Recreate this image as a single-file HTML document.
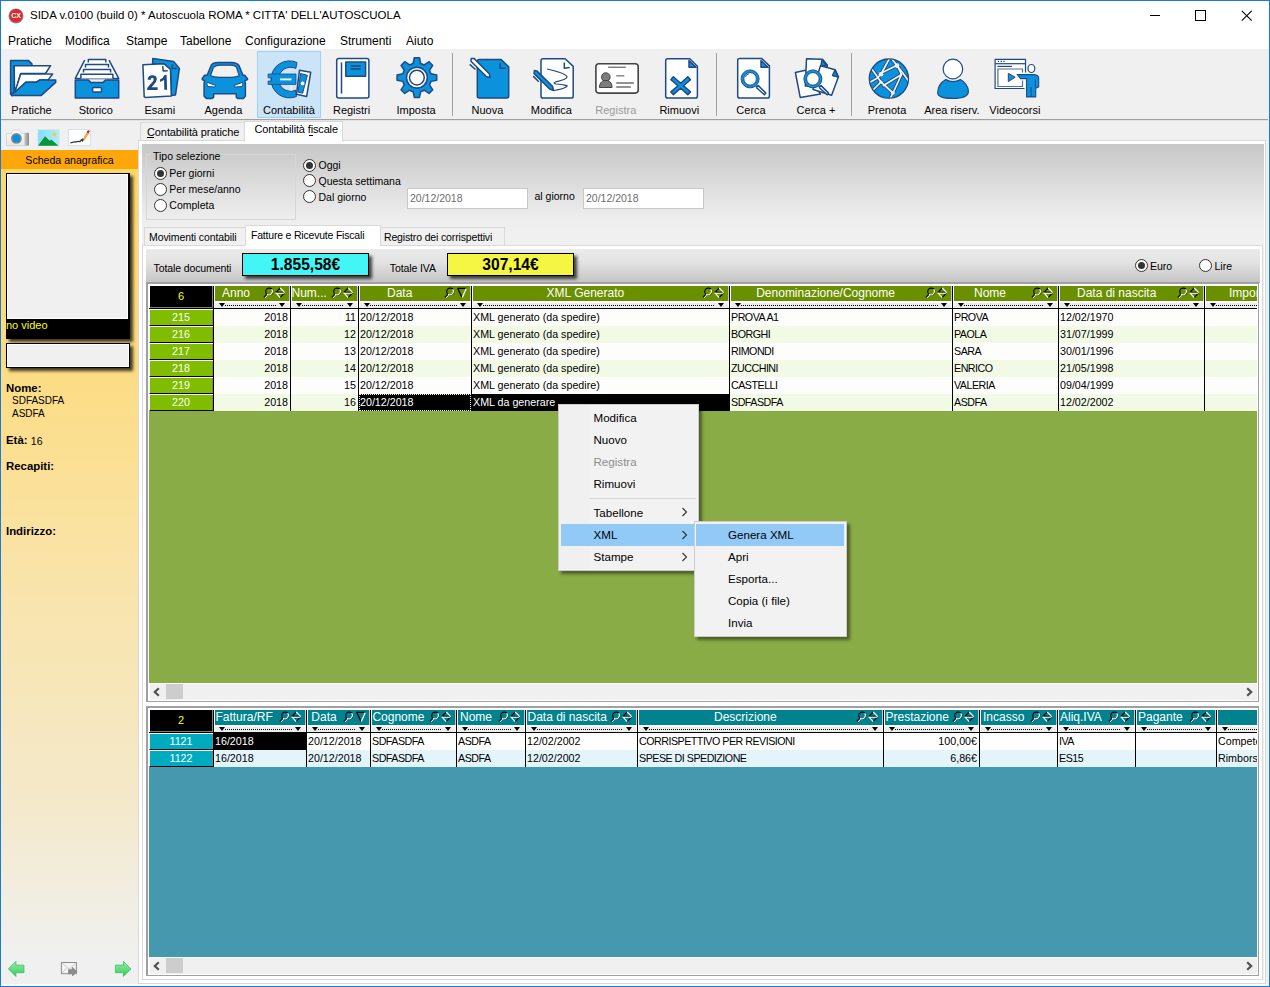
<!DOCTYPE html>
<html><head><meta charset="utf-8"><title>SIDA</title>
<style>
html,body{margin:0;padding:0;}
body{width:1270px;height:987px;position:relative;overflow:hidden;background:#f0f0f0;font-family:"Liberation Sans",sans-serif;}
.t{position:absolute;line-height:1;white-space:pre;}
.r{position:absolute;box-sizing:border-box;}
</style></head><body>
<div class="r" style="left:0px;top:0px;width:1270px;height:49px;background:#fff;"></div>
<div class="r" style="left:0px;top:0px;width:1270px;height:1px;background:#1a7ad6;"></div>
<div class="r" style="left:0px;top:0px;width:1px;height:987px;background:#1a7ad6;"></div>
<div class="r" style="left:1269px;top:0px;width:1px;height:987px;background:#1a7ad6;"></div>
<div class="r" style="left:0px;top:986px;width:1270px;height:1px;background:#1a7ad6;"></div>
<svg class="r" style="left:8px;top:8px;" width="16" height="16" viewBox="0 0 16 16"><circle cx="8" cy="8" r="7.5" fill="#888"/><circle cx="8" cy="7.6" r="6.6" fill="#e0262e"/><text x="8" y="10.2" font-size="7" font-weight="bold" text-anchor="middle" fill="#fff" font-family="Liberation Sans">CX</text></svg>
<div class="t" style="left:30px;top:10.37px;font-size:11.5px;color:#000;">SIDA v.0100 (build 0) * Autoscuola ROMA * CITTA' DELL'AUTOSCUOLA</div>
<div class="r" style="left:1150px;top:15px;width:10px;height:1px;background:#000;"></div>
<div class="r" style="left:1195px;top:10px;width:11px;height:11px;border:1px solid #000;"></div>
<svg class="r" style="left:1240.5px;top:9.5px;" width="12" height="12" viewBox="0 0 12 12"><path d="M0.8 0.8L10.7 10.7M10.7 0.8L0.8 10.7" stroke="#000" stroke-width="1.05"/></svg>
<div class="t" style="left:8px;top:35.14px;font-size:12px;color:#000;">Pratiche</div>
<div class="t" style="left:65px;top:35.14px;font-size:12px;color:#000;">Modifica</div>
<div class="t" style="left:126px;top:35.14px;font-size:12px;color:#000;">Stampe</div>
<div class="t" style="left:180px;top:35.14px;font-size:12px;color:#000;">Tabellone</div>
<div class="t" style="left:245px;top:35.14px;font-size:12px;color:#000;">Configurazione</div>
<div class="t" style="left:340px;top:35.14px;font-size:12px;color:#000;">Strumenti</div>
<div class="t" style="left:406px;top:35.14px;font-size:12px;color:#000;">Aiuto</div>
<div class="r" style="left:1px;top:119px;width:1267px;height:1px;background:#a0a0a0;"></div>
<div class="r" style="left:1px;top:120px;width:1267px;height:1px;background:#e3e3e3;"></div>
<div class="r" style="left:257px;top:51px;width:64px;height:67px;background:#cce4f7;border:1px solid #99d1ff;"></div>
<div class="t" style="left:-8.5px;top:104.89px;font-size:11px;color:#000;width:80px;text-align:center;">Pratiche</div>
<div class="t" style="left:55.8px;top:104.89px;font-size:11px;color:#000;width:80px;text-align:center;">Storico</div>
<div class="t" style="left:119.80000000000001px;top:104.89px;font-size:11px;color:#000;width:80px;text-align:center;">Esami</div>
<div class="t" style="left:183.4px;top:104.89px;font-size:11px;color:#000;width:80px;text-align:center;">Agenda</div>
<div class="t" style="left:249px;top:104.89px;font-size:11px;color:#000;width:80px;text-align:center;">Contabilità</div>
<div class="t" style="left:311.6px;top:104.89px;font-size:11px;color:#000;width:80px;text-align:center;">Registri</div>
<div class="t" style="left:376px;top:104.89px;font-size:11px;color:#000;width:80px;text-align:center;">Imposta</div>
<div class="t" style="left:447.4px;top:104.89px;font-size:11px;color:#000;width:80px;text-align:center;">Nuova</div>
<div class="t" style="left:511.29999999999995px;top:104.89px;font-size:11px;color:#000;width:80px;text-align:center;">Modifica</div>
<div class="t" style="left:575.8px;top:104.89px;font-size:11px;color:#9a9a9a;width:80px;text-align:center;">Registra</div>
<div class="t" style="left:639.3px;top:104.89px;font-size:11px;color:#000;width:80px;text-align:center;">Rimuovi</div>
<div class="t" style="left:711px;top:104.89px;font-size:11px;color:#000;width:80px;text-align:center;">Cerca</div>
<div class="t" style="left:776px;top:104.89px;font-size:11px;color:#000;width:80px;text-align:center;">Cerca +</div>
<div class="t" style="left:847px;top:104.89px;font-size:11px;color:#000;width:80px;text-align:center;">Prenota</div>
<div class="t" style="left:911.9px;top:104.89px;font-size:11px;color:#000;width:80px;text-align:center;">Area riserv.</div>
<div class="t" style="left:974.9px;top:104.89px;font-size:11px;color:#000;width:80px;text-align:center;">Videocorsi</div>
<div class="r" style="left:452px;top:53px;width:1px;height:63px;background:#a0a0a0;"></div>
<div class="r" style="left:716px;top:53px;width:1px;height:63px;background:#a0a0a0;"></div>
<div class="r" style="left:851px;top:53px;width:1px;height:63px;background:#a0a0a0;"></div>
<svg class="r" style="left:5px;top:52px;" width="60" height="50" viewBox="0 0 60 50"><path d="M5.6 8.4 H23.3 L26.9 11.9 V13.7 H9.2 V42 L7.2 43.6 L5.6 42 Z" fill="#0a92dc" stroke="#1f4a84" stroke-width="1.5" stroke-linejoin="round"/><path d="M9.2 13.7 H45.6 L40.5 21.5 H15.7 L12.4 32.4 L9.6 40.5 Z" fill="#fff" stroke="#1f4a84" stroke-width="1.5" stroke-linejoin="round"/><path d="M15.7 22 H47.6 L43.1 27.9 H35 L31.4 30.2 H20.8 L9.6 40.5 L12.4 32.4 Z" fill="#fff" stroke="#1f4a84" stroke-width="1.5" stroke-linejoin="round"/><path d="M9.6 40.5 L20.8 30.2 H31.4 L35 27.9 H50.7 V30.4 L36 43.6 H7.1 L5.6 42 Z" fill="#0a92dc" stroke="#1f4a84" stroke-width="1.5" stroke-linejoin="round"/></svg>
<svg class="r" style="left:68px;top:52px;" width="60" height="50" viewBox="0 0 60 50"><path d="M16.7 8.1 L7.3 26.4 H50.7 L41 8.1" fill="#fff" stroke="#1f4a84" stroke-width="1.5" stroke-linejoin="round"/><path d="M20.3 10.6 V7.6 H37.8 V10.6" fill="#fff" stroke="#1f4a84" stroke-width="1.5" stroke-linejoin="round"/><path d="M17.5 15.5 V12.4 H40.5 V15.5" fill="#fff" stroke="#1f4a84" stroke-width="1.5" stroke-linejoin="round"/><path d="M15.5 20.5 V17.5 H42.6 V20.5" fill="#fff" stroke="#1f4a84" stroke-width="1.5" stroke-linejoin="round"/><path d="M12.9 26.4 V22.3 H44.9 V26.4" fill="#fff" stroke="#1f4a84" stroke-width="1.5" stroke-linejoin="round"/><path d="M7.3 28.1 H20.3 L22.8 30.4 H35 L37.5 28.1 H50.7 V45.9 H7.3 Z" fill="#0a92dc" stroke="#1f4a84" stroke-width="1.5" stroke-linejoin="round"/><rect x="24.6" y="35.5" width="8.9" height="4.5" rx="1" fill="#fff" stroke="#1f4a84" stroke-width="1.5" stroke-linejoin="round"/></svg>
<svg class="r" style="left:132px;top:52px;" width="60" height="50" viewBox="0 0 60 50"><path d="M20.8 6.6 L41.6 9.4 L47.4 16.5 L43.5 43 L39.2 43.6 L38.5 17.5 L31.9 11.7 L20.6 12.2 Z" fill="#0a92dc" stroke="#1f4a84" stroke-width="1.5" stroke-linejoin="round"/><path d="M40.5 12.2 L40 16.2 L44.6 16.7" fill="none" stroke="#1f4a84" stroke-width="1.5" stroke-linejoin="round"/><path d="M10.9 12.7 L31.9 11.7 L38.5 17.5 L39.3 44.1 L13.2 45.4 L12.2 44.6 Z" fill="#fff" stroke="#1f4a84" stroke-width="1.5" stroke-linejoin="round"/><path d="M30.7 14.2 L31.2 19 L35.7 18.8" fill="none" stroke="#1f4a84" stroke-width="1.5" stroke-linejoin="round"/><path d="M15.5 27.6 Q16.2 23.2 20.5 23.2 Q24.8 23.4 24.8 27.2 Q24.6 30 21.5 33 L19.6 35.2 H25.6 V37.9 H15.2 V36 Q17 33.6 20.2 30.3 Q21.8 28.6 21.7 27.3 Q21.5 25.7 20.3 25.7 Q18.8 25.7 18.4 28 Z" fill="#1f4a84"/><path d="M28 27.6 Q31.2 26.2 32.6 23.1 H34.6 L35.1 37.8 H32.3 L32.1 27.8 Q30.4 29.4 28.2 30 Z" fill="#1f4a84"/></svg>
<svg class="r" style="left:196px;top:52px;" width="60" height="50" viewBox="0 0 60 50"><path d="M15.2 13.2 Q17 10.4 21.8 10.4 H35.5 Q41 10.4 43.1 13.7 L46.9 23.3 H48.7 L51.7 26.9 L50.7 28.1 L48.7 28.9 L49.4 30.9 V44.1 L47.6 46.4 H41.6 L40.3 45.1 V41.8 H17.7 V45.1 L16.2 46.4 H10.4 L8.1 44.1 V30.9 L8.9 28.9 L6.3 27.6 V26.4 L8.6 23.3 H11.2 Z" fill="#0a92dc" stroke="#1f4a84" stroke-width="1.5" stroke-linejoin="round"/><path d="M17.5 15.2 Q20 13.2 24.3 13.2 H35 Q39 13.2 40.5 15.2 L43.3 23.8 Q39 25.4 35.5 25.3 H24.3 Q18 25.4 14.4 23.8 Z" fill="#f0f0f0" stroke="#1f4a84" stroke-width="1.2"/><path d="M11.4 30.4 L19.8 33.5 L18.8 35 L11.7 34.5 L10.9 31.9 Z" fill="#fff" stroke="#1f4a84" stroke-width="1"/><path d="M46.4 30.4 L38 33.5 L39 35 L46.1 34.5 L46.9 31.9 Z" fill="#fff" stroke="#1f4a84" stroke-width="1"/></svg>
<svg class="r" style="left:260px;top:52px;" width="60" height="50" viewBox="0 0 60 50"><path d="M37 10.5 A18.5 18.5 0 1 0 36.5 44.5 L35.5 38.2 A12 12 0 1 1 35.8 16.5 Z" fill="#0a92dc" stroke="#1f4a84" stroke-width="1"/><path d="M8.1 22 H36 V32.4 H8.1 V29.1 H11.5 V25.8 H8.1 Z" fill="#0a92dc" stroke="#1f4a84" stroke-width="0.8"/><path d="M20 27.4 H31.5" stroke="#f4f8fc" stroke-width="1.9"/><path d="M31.2 33 V38.5" stroke="#f4f8fc" stroke-width="1.2"/><path d="M39.5 18.2 L50.7 20.3 L46.6 44.6 L36.5 42.3 Z" fill="#fff" stroke="#1f4a84" stroke-width="1.5" stroke-linejoin="round"/><path d="M40.5 21.5 L47.4 23.3 L42.6 41.3 L38 40 Z" fill="#0a92dc" stroke="#1f4a84" stroke-width="1"/><circle cx="42.6" cy="31.4" r="1.9" fill="#fff"/></svg>
<svg class="r" style="left:323px;top:52px;" width="60" height="50" viewBox="0 0 60 50"><rect x="13.7" y="6.6" width="32.2" height="39.3" rx="2" fill="#fff" stroke="#1f4a84" stroke-width="1.5" stroke-linejoin="round"/><path d="M18.5 10.4 V41.6" stroke="#1f4a84" stroke-width="1.5" stroke-linejoin="round"/><rect x="22.8" y="10.1" width="19.8" height="14.2" fill="#0a92dc" stroke="#1f4a84" stroke-width="1.5" stroke-linejoin="round"/><path d="M27.6 13.9 H37.8 M27.6 17 H37.8" stroke="#1f4a84" stroke-width="1.5" stroke-linejoin="round"/></svg>
<svg class="r" style="left:387px;top:52px;" width="60" height="50" viewBox="0 0 60 50"><path d="M26.14 11.49 L27.31 5.77 L32.49 5.77 L33.66 11.49 L37.22 12.97 L42.09 9.74 L45.76 13.41 L42.53 18.28 L44.01 21.84 L49.73 23.01 L49.73 28.19 L44.01 29.36 L42.53 32.92 L45.76 37.79 L42.09 41.46 L37.22 38.23 L33.66 39.71 L32.49 45.43 L27.31 45.43 L26.14 39.71 L22.58 38.23 L17.71 41.46 L14.04 37.79 L17.27 32.92 L15.79 29.36 L10.07 28.19 L10.07 23.01 L15.79 21.84 L17.27 18.28 L14.04 13.41 L17.71 9.74 L22.58 12.97Z" fill="#0a92dc" stroke="#1f4a84" stroke-width="1.5" stroke-linejoin="round"/><circle cx="29.9" cy="25.6" r="10.4" fill="#fff" stroke="#1f4a84" stroke-width="1.5" stroke-linejoin="round"/><circle cx="29.9" cy="25.6" r="7.4" fill="#fff" stroke="#1f4a84" stroke-width="1.5" stroke-linejoin="round"/></svg>
<svg class="r" style="left:457px;top:52px;" width="60" height="50" viewBox="0 0 60 50"><path d="M20.3 9.5 Q20.3 7.6 22.3 7.6 H44.1 L51.7 14.7 V44 Q51.7 45.9 49.7 45.9 H22.3 Q20.3 45.9 20.3 44 Z" fill="#0a92dc" stroke="#1f4a84" stroke-width="1.5" stroke-linejoin="round"/><path d="M43.1 10.9 V16.2 H48.7" fill="none" stroke="#1f4a84" stroke-width="1.5" stroke-linejoin="round"/><path d="M14.2 6.6 L17 6.4 L32.4 22 L33 25.6 L29.6 24.8 L14 9.3 Z" fill="#fff" stroke="#1f4a84" stroke-width="1.5" stroke-linejoin="round"/><path d="M12.7 12.4 L18.5 17.5" stroke="#1f4a84" stroke-width="1.5" stroke-linejoin="round"/></svg>
<svg class="r" style="left:521px;top:52px;" width="60" height="50" viewBox="0 0 60 50"><path d="M20 8.8 Q20 6.8 22 6.8 H44.1 L52.2 14.4 V44 Q52.2 46.1 50.2 46.1 H22 Q20 46.1 20 44 Z" fill="#fff" stroke="#1f4a84" stroke-width="1.5" stroke-linejoin="round"/><path d="M43.3 10.4 V16.2 L48.7 15.5" fill="none" stroke="#1f4a84" stroke-width="1.5" stroke-linejoin="round"/><path d="M26.1 17 Q44 21 46.1 24.8 Q46 27.5 35 29.8 Q31 31.2 35 32 Q47 33 46.1 34.2 Q43 37 32.9 38.5" fill="none" stroke="#1f4a84" stroke-width="1.2"/><path d="M13.4 18.6 L15.8 18.9 L31.5 34.3 L32.6 38.6 L28.6 37 L13 21.4 Z" fill="#0a92dc" stroke="#1f4a84" stroke-width="1.5" stroke-linejoin="round"/><path d="M12.2 24.1 L17.7 29.7" stroke="#1f4a84" stroke-width="1.5" stroke-linejoin="round"/></svg>
<svg class="r" style="left:585px;top:52px;" width="60" height="50" viewBox="0 0 60 50"><rect x="10.9" y="11.7" width="42.3" height="29.4" rx="3" fill="#fff" stroke="#454545" stroke-width="1.6"/><path d="M23.1 15.2 H40.8" stroke="#454545" stroke-width="1"/><circle cx="20.8" cy="25.1" r="4.3" fill="#7d7d7d" stroke="#454545" stroke-width="1"/><path d="M14.4 35.5 Q14.6 30 19 28.5 H22.6 Q27 30 27.1 35.5 Z" fill="#7d7d7d" stroke="#454545" stroke-width="1"/><path d="M31.2 23.8 H39.3" stroke="#8a8a8a" stroke-width="1.5"/><path d="M31.2 30.9 H48.9 M31.2 35 H45.9" stroke="#707070" stroke-width="1.5"/></svg>
<svg class="r" style="left:649px;top:52px;" width="60" height="50" viewBox="0 0 60 50"><path d="M16.7 8.8 Q16.7 6.8 18.7 6.8 H40.8 L48.4 14.2 V44 Q48.4 46.1 46.4 46.1 H18.7 Q16.7 46.1 16.7 44 Z" fill="#fff" stroke="#1f4a84" stroke-width="1.5" stroke-linejoin="round"/><path d="M40 8.6 V15.2 H47.1 Z" fill="#0a92dc" stroke="#1f4a84" stroke-width="1.5" stroke-linejoin="round"/><path d="M24.3 24.8 L31.7 31.3 L38.8 24.8 L41.5 27.7 L34.5 33.7 L41.5 39.9 L38.8 42.6 L31.7 36.3 L24.3 42.6 L21.9 39.9 L29 33.7 L21.9 27.7 Z" fill="#0a92dc" stroke="#1f4a84" stroke-width="1.5" stroke-linejoin="round"/></svg>
<svg class="r" style="left:721px;top:52px;" width="60" height="50" viewBox="0 0 60 50"><path d="M16.7 8.6 Q16.7 6.6 18.7 6.6 H40.8 L48.4 13.9 V44 Q48.4 46.1 46.4 46.1 H18.7 Q16.7 46.1 16.7 44 Z" fill="#fff" stroke="#1f4a84" stroke-width="1.5" stroke-linejoin="round"/><path d="M40 8.6 V15.2 H47.1 Z" fill="#0a92dc" stroke="#1f4a84" stroke-width="1.5" stroke-linejoin="round"/><path d="M35.5 34.5 L37.3 33.6 L44.8 41.1 L43.4 42.8 L35.6 35.8 Z" fill="#fff" stroke="#1f4a84" stroke-width="1.5" stroke-linejoin="round"/><circle cx="29.1" cy="26.9" r="7.6" fill="#fff" stroke="#0a92dc" stroke-width="2.6"/><circle cx="29.1" cy="26.9" r="9" fill="none" stroke="#1f4a84" stroke-width="1"/><circle cx="29.1" cy="26.9" r="6.3" fill="none" stroke="#1f4a84" stroke-width="1"/><path d="M24.5 25 Q25 22.5 28 21.8" fill="none" stroke="#1f4a84" stroke-width="0.9"/></svg>
<svg class="r" style="left:785px;top:52px;" width="60" height="50" viewBox="0 0 60 50"><path d="M10.4 20.5 L20.3 18.2 L35.5 42.1 L15.2 45.4 Z" fill="#fff" stroke="#1f4a84" stroke-width="1.5" stroke-linejoin="round"/><path d="M21.5 6.8 L37.5 7.3 L42.3 12.9 L40 35 L20.3 34 Z" fill="#fff" stroke="#1f4a84" stroke-width="1.5" stroke-linejoin="round"/><path d="M37 8 L36 13.5 L42 14 Z" fill="#0a92dc" stroke="#1f4a84" stroke-width="1.5" stroke-linejoin="round"/><path d="M35.5 13.7 L50.2 17.7 L53.5 24.8 L46.6 43.3 L28 37.5 Z" fill="#fff" stroke="#1f4a84" stroke-width="1.5" stroke-linejoin="round"/><path d="M50 18 L47.5 23.5 L53 25 Z" fill="#0a92dc" stroke="#1f4a84" stroke-width="1.5" stroke-linejoin="round"/><path d="M34.3 34.5 L36.1 33.6 L43.6 41.1 L42.2 42.8 L34.4 35.8 Z" fill="#fff" stroke="#1f4a84" stroke-width="1.5" stroke-linejoin="round"/><circle cx="27.9" cy="26.9" r="7.6" fill="#fff" stroke="#0a92dc" stroke-width="2.6"/><circle cx="27.9" cy="26.9" r="9" fill="none" stroke="#1f4a84" stroke-width="1"/><circle cx="27.9" cy="26.9" r="6.3" fill="none" stroke="#1f4a84" stroke-width="1"/></svg>
<svg class="r" style="left:857px;top:52px;" width="60" height="50" viewBox="0 0 60 50"><defs><clipPath id="gclip"><circle cx="31.9" cy="26.6" r="19"/></clipPath></defs><circle cx="31.9" cy="26.6" r="19.6" fill="#0a92dc" stroke="#1f4a84" stroke-width="1.3"/><g clip-path="url(#gclip)"><g stroke="#1f4a84" stroke-width="3.6" fill="none" stroke-linecap="round" stroke-linejoin="round"><path d="M32.5 6.5 L24 22 L20.5 26 L12.5 30.5"/><path d="M14.5 16.5 L24 30 L36 41 L33 47"/><path d="M35 7 L39.5 13 L45.5 20.5 L51.5 29"/><path d="M25.5 20.5 L39.5 13.5"/><path d="M26.5 33.5 L44.5 22.5"/><path d="M36 41 L44.5 22.5 L41 15"/><path d="M16 38 L21 33 L24 30"/></g><g stroke="#f4f4f4" stroke-width="1.7" fill="none" stroke-linecap="round" stroke-linejoin="round"><path d="M32.5 6.5 L24 22 L20.5 26 L12.5 30.5"/><path d="M14.5 16.5 L24 30 L36 41 L33 47"/><path d="M35 7 L39.5 13 L45.5 20.5 L51.5 29"/><path d="M25.5 20.5 L39.5 13.5"/><path d="M26.5 33.5 L44.5 22.5"/><path d="M36 41 L44.5 22.5 L41 15"/><path d="M16 38 L21 33 L24 30"/></g></g><circle cx="24" cy="22.3" r="2.3" fill="#f4f4f4"/><circle cx="40" cy="13.6" r="2.3" fill="#f4f4f4"/><circle cx="24" cy="30" r="1.6" fill="#f4f4f4"/><circle cx="36" cy="41" r="1.8" fill="#f4f4f4"/></svg>
<svg class="r" style="left:921px;top:52px;" width="60" height="50" viewBox="0 0 60 50"><circle cx="31.9" cy="17" r="9.8" fill="#fff" stroke="#1f4a84" stroke-width="1.2"/><path d="M24.8 27.6 Q31.9 31.5 39.5 27.6 Q47 32 47.4 39.5 Q47.4 46.4 31.7 46.4 Q16.4 46.4 16.7 40.5 Q17 32 24.8 27.6 Z" fill="#0a92dc" stroke="#1f4a84" stroke-width="1.2"/></svg>
<svg class="r" style="left:985px;top:52px;" width="60" height="50" viewBox="0 0 60 50"><path d="M40.5 20.5 V7.3 H10.1 V36.5 H39.5" fill="#fff" stroke="#1f4a84" stroke-width="1.2"/><path d="M10.1 11.7 H40.5" stroke="#1f4a84" stroke-width="1.2"/><path d="M12.9 9.4 H14 M15.6 9.4 H17 M18.3 9.4 H19.6" stroke="#1f4a84" stroke-width="1.2"/><path d="M12.4 14.4 H26.9" stroke="#1f4a84" stroke-width="1.2"/><path d="M37.5 20.5 V17 H12.9 V34.5 H37.5 V28.5" fill="#fff" stroke="#4f6f9f" stroke-width="1.2"/><path d="M23.3 21.3 L30.2 25.3 L23.3 29.6 Z" fill="#0a92dc" stroke="#1f4a84" stroke-width="1"/><ellipse cx="46.4" cy="16.5" rx="3.4" ry="4" fill="#fff" stroke="#1f4a84" stroke-width="1.2"/><path d="M32.4 22.6 H49.2 Q53.7 23 53.7 26.4 V35 L50.7 36.2 V44.9 H41.6 V26.6 H35.5 Z" fill="#0a92dc" stroke="#1f4a84" stroke-width="1.1"/><path d="M46.1 35 V44.9 M50.4 27.4 V35.5" stroke="#1f4a84" stroke-width="1"/></svg>
<div class="r" style="left:1px;top:169px;width:137px;height:815px;background:linear-gradient(#ffd866 0px,#fddb7c 160px,#f9e3a6 390px,#f4e9cc 640px,#f0efe9 760px,#f0f0f0 790px);"></div>
<div class="r" style="left:1px;top:150px;width:137px;height:19px;background:#ffa60a;"></div>
<div class="t" style="left:1px;top:154.53px;font-size:10.6px;color:#000;width:137px;text-align:center;">Scheda anagrafica</div>
<div class="r" style="left:6px;top:173px;width:124px;height:166px;background:#000;box-shadow:3px 3px 3px rgba(0,0,0,0.75);"></div>
<div class="r" style="left:7px;top:174px;width:121px;height:145px;background:#f0f0f0;border:1px solid #fff;border-top-color:#fff;"></div>
<div class="t" style="left:6px;top:320.49px;font-size:11px;color:#ffff00;">no video</div>
<div class="r" style="left:6px;top:343px;width:124px;height:25px;background:#f0f0f0;border:1px solid #000;box-shadow:3px 3px 3px rgba(0,0,0,0.75);"></div>
<div class="r" style="left:7px;top:344px;width:122px;height:23px;border:1px solid #fff;"></div>
<div class="t" style="left:6px;top:382.55px;font-size:11.4px;color:#000;font-weight:bold;">Nome:</div>
<div class="t" style="left:12px;top:396.34px;font-size:10px;color:#000;">SDFASDFA</div>
<div class="t" style="left:12px;top:409.04px;font-size:10px;color:#000;">ASDFA</div>
<div class="t" style="left:6px;top:434.55px;font-size:11.4px;color:#000;font-weight:bold;">Età:</div>
<div class="t" style="left:30.8px;top:435.51px;font-size:10.5px;color:#000;">16</div>
<div class="t" style="left:6px;top:460.55px;font-size:11.4px;color:#000;font-weight:bold;">Recapiti:</div>
<div class="t" style="left:6px;top:525.95px;font-size:11.4px;color:#000;font-weight:bold;">Indirizzo:</div>
<svg class="r" style="left:5px;top:128px;" width="26" height="20" viewBox="0 0 26 20"><defs><linearGradient id="cg" x1="0" x2="0" y1="0" y2="1"><stop offset="0" stop-color="#fafafa"/><stop offset="1" stop-color="#e6e6e6"/></linearGradient><linearGradient id="gg" x1="0" x2="1" y1="0" y2="0"><stop offset="0" stop-color="#c8c8c8"/><stop offset="1" stop-color="#888"/></linearGradient></defs><path d="M1.5 5.5 H6 L8 2 H14.5 L16.5 5.5 H20 V17.8 H1.5 Z" fill="url(#cg)" stroke="#d0d0d0" stroke-width="0.8"/><rect x="19.5" y="4.8" width="4.5" height="13" rx="1" fill="url(#gg)"/><circle cx="11.4" cy="10.4" r="5.4" fill="#8a8a8a"/><circle cx="11.4" cy="10.4" r="3.9" fill="#0d8fe0"/></svg>
<svg class="r" style="left:37px;top:129px;" width="23" height="18" viewBox="0 0 23 18"><defs><linearGradient id="sk" x1="0" x2="1" y1="0" y2="0"><stop offset="0" stop-color="#86def8"/><stop offset="1" stop-color="#b3eaf8"/></linearGradient></defs><rect x="0.9" y="0.6" width="21.5" height="16.2" fill="url(#sk)" stroke="#d6e6ee" stroke-width="0.6"/><path d="M1 16.8 L8 7.2 L12.8 11.8 L14.2 10.5 L21.5 16.8 Z" fill="#0a9439"/><circle cx="17.6" cy="5.4" r="1.9" fill="#f3cc4a"/></svg>
<svg class="r" style="left:68px;top:129px;" width="23" height="18" viewBox="0 0 23 18"><rect x="0.5" y="0.6" width="21.9" height="16" fill="#fff" stroke="#d3dce8" stroke-width="0.9"/><path d="M2.3 14 Q6 12.8 8 13 Q10 12 12 12.6 L13.5 10.8 L14.5 11.8 L15 10.2 L16 11" fill="none" stroke="#333" stroke-width="1.3"/><path d="M15.8 10.6 L20 3.6" stroke="#e8a83a" stroke-width="2.2"/><path d="M19.5 3.8 L21 1.6" stroke="#d82020" stroke-width="2.2"/></svg>
<svg class="r" style="left:7px;top:960px;" width="18" height="18" viewBox="0 0 18 18"><defs><linearGradient id="ga" x1="0" x2="0" y1="0" y2="1"><stop offset="0" stop-color="#8ff0a8"/><stop offset="1" stop-color="#3cc860"/></linearGradient></defs><path d="M1.4 8.9 L8.9 1.4 V5.2 H16.9 V12.7 H8.9 V16.4 Z" fill="url(#ga)" stroke="#3bbf5e" stroke-width="0.8"/></svg>
<svg class="r" style="left:114px;top:960px;" width="18" height="18" viewBox="0 0 18 18"><path d="M16.9 8.9 L9.4 1.4 V5.2 H1.4 V12.7 H9.4 V16.4 Z" fill="url(#ga)" stroke="#3bbf5e" stroke-width="0.8"/></svg>
<svg class="r" style="left:60px;top:961px;" width="19" height="17" viewBox="0 0 19 17"><rect x="1.4" y="1.5" width="15" height="11.2" fill="#f4f4f4" stroke="#8c8c8c" stroke-width="1"/><path d="M1.6 1.8 L9 8 L16.2 1.8 M1.6 12.5 L6.5 7.2 M16.2 12.5 L11.5 7.2" fill="none" stroke="#c0c0c0" stroke-width="0.8"/><path d="M8.5 8.6 H12.5 V6.2 L16.8 10.6 L12.5 15 V12.6 H8.5 Z" fill="#8c8c8c" stroke="#7a7a7a" stroke-width="0.6"/></svg>
<div class="r" style="left:1px;top:984px;width:1268px;height:2px;background:#fff;"></div>
<div class="r" style="left:140px;top:122px;width:105px;height:19px;background:#f0f0f0;border:1px solid #d9d9d9;border-bottom:none;"></div>
<div class="t" style="left:147px;top:126.59px;font-size:11px;color:#000;letter-spacing:-0.1px;">Contabilità pratiche</div>
<div class="r" style="left:146.5px;top:137px;width:7px;height:1px;background:#000;"></div>
<div class="r" style="left:138px;top:140px;width:1128px;height:844px;background:#fff;border:1px solid #d9d9d9;"></div>
<div class="r" style="left:244px;top:121px;width:99px;height:21px;background:#fff;border:1px solid #d9d9d9;border-bottom:none;"></div>
<div class="t" style="left:254.5px;top:124.29px;font-size:11px;color:#000;letter-spacing:-0.15px;">Contabilità fiscale</div>
<div class="r" style="left:309px;top:135px;width:4px;height:1px;background:#000;"></div>
<div class="r" style="left:142px;top:144px;width:1122px;height:835px;background:linear-gradient(#c7c7c7 0px,#dcdcdc 40px,#eeeeee 76px,#f0f0f0 90px);"></div>
<div class="r" style="left:146px;top:154px;width:150px;height:66px;border:1px solid #d6d6d6;"></div>
<div class="r" style="left:151px;top:150px;width:71px;height:10px;background:linear-gradient(#cacaca,#cdcdcd);"></div>
<div class="t" style="left:153px;top:150.51px;font-size:10.5px;color:#000;">Tipo selezione</div>
<svg class="r" style="left:154.0px;top:166.5px;" width="13" height="13" viewBox="0 0 13 13"><circle cx="6.5" cy="6.5" r="6" fill="#fff" stroke="#333" stroke-width="1"/><circle cx="6.5" cy="6.5" r="3.5" fill="#333"/></svg>
<div class="t" style="left:169.3px;top:168.11px;font-size:10.5px;color:#000;">Per giorni</div>
<svg class="r" style="left:154.0px;top:182.5px;" width="13" height="13" viewBox="0 0 13 13"><circle cx="6.5" cy="6.5" r="6" fill="#fff" stroke="#333" stroke-width="1"/></svg>
<div class="t" style="left:169.3px;top:184.11px;font-size:10.5px;color:#000;">Per mese/anno</div>
<svg class="r" style="left:154.0px;top:198.5px;" width="13" height="13" viewBox="0 0 13 13"><circle cx="6.5" cy="6.5" r="6" fill="#fff" stroke="#333" stroke-width="1"/></svg>
<div class="t" style="left:169.3px;top:200.11px;font-size:10.5px;color:#000;">Completa</div>
<svg class="r" style="left:303.0px;top:158.5px;" width="13" height="13" viewBox="0 0 13 13"><circle cx="6.5" cy="6.5" r="6" fill="#fff" stroke="#333" stroke-width="1"/><circle cx="6.5" cy="6.5" r="3.5" fill="#333"/></svg>
<div class="t" style="left:318.5px;top:160.11px;font-size:10.5px;color:#000;">Oggi</div>
<svg class="r" style="left:303.0px;top:174.4px;" width="13" height="13" viewBox="0 0 13 13"><circle cx="6.5" cy="6.5" r="6" fill="#fff" stroke="#333" stroke-width="1"/></svg>
<div class="t" style="left:318.5px;top:176.01px;font-size:10.5px;color:#000;">Questa settimana</div>
<svg class="r" style="left:303.0px;top:190.3px;" width="13" height="13" viewBox="0 0 13 13"><circle cx="6.5" cy="6.5" r="6" fill="#fff" stroke="#333" stroke-width="1"/></svg>
<div class="t" style="left:318.5px;top:191.91px;font-size:10.5px;color:#000;">Dal giorno</div>
<div class="r" style="left:407px;top:188px;width:121px;height:21px;background:#fff;border:1px solid #c8c8c8;"></div>
<div class="t" style="left:410px;top:193.11px;font-size:10.5px;color:#6d6d6d;">20/12/2018</div>
<div class="t" style="left:534.5px;top:190.61px;font-size:10.5px;color:#000;">al giorno</div>
<div class="r" style="left:583px;top:188px;width:121px;height:21px;background:#fff;border:1px solid #c8c8c8;"></div>
<div class="t" style="left:586px;top:193.11px;font-size:10.5px;color:#6d6d6d;">20/12/2018</div>
<div class="r" style="left:144px;top:227px;width:102px;height:19px;background:#f0f0f0;border:1px solid #d9d9d9;border-bottom:none;"></div>
<div class="t" style="left:149px;top:231.61px;font-size:10.5px;color:#000;letter-spacing:-0.1px;">Movimenti contabili</div>
<div class="r" style="left:380px;top:227px;width:125px;height:19px;background:#f0f0f0;border:1px solid #d9d9d9;border-bottom:none;"></div>
<div class="t" style="left:384px;top:231.61px;font-size:10.5px;color:#000;letter-spacing:-0.15px;">Registro dei corrispettivi</div>
<div class="r" style="left:142px;top:245px;width:1121px;height:735px;background:#fff;border:1px solid #d9d9d9;"></div>
<div class="r" style="left:245px;top:225px;width:136px;height:21px;background:#fff;border:1px solid #d9d9d9;border-bottom:none;"></div>
<div class="t" style="left:251px;top:229.61px;font-size:10.5px;color:#000;letter-spacing:-0.2px;">Fatture e Ricevute Fiscali</div>
<div class="r" style="left:146px;top:249px;width:1114px;height:34px;background:linear-gradient(#ebebeb,#e3e3e3 40%,#c5c5c5);border-bottom:1px solid #a8a8a8;"></div>
<div class="t" style="left:153.5px;top:262.51px;font-size:10.5px;color:#000;letter-spacing:-0.1px;">Totale documenti</div>
<div class="r" style="left:242px;top:253px;width:127px;height:23px;background:#44f5f5;border:1px solid #000;box-shadow:3px 3px 3px rgba(0,0,0,0.7);"></div>
<div class="t" style="left:242px;top:256.59px;font-size:15.6px;color:#000;font-weight:bold;width:127px;text-align:center;">1.855,58€</div>
<div class="t" style="left:389.8px;top:262.51px;font-size:10.5px;color:#000;letter-spacing:-0.1px;">Totale IVA</div>
<div class="r" style="left:447px;top:253px;width:127px;height:23px;background:#f5f544;border:1px solid #000;box-shadow:3px 3px 3px rgba(0,0,0,0.7);"></div>
<div class="t" style="left:447px;top:256.59px;font-size:15.6px;color:#000;font-weight:bold;width:127px;text-align:center;">307,14€</div>
<svg class="r" style="left:1134.5px;top:259.0px;" width="13" height="13" viewBox="0 0 13 13"><circle cx="6.5" cy="6.5" r="6" fill="#fff" stroke="#333" stroke-width="1"/><circle cx="6.5" cy="6.5" r="3.5" fill="#333"/></svg>
<div class="t" style="left:1150px;top:261.11px;font-size:10.5px;color:#000;">Euro</div>
<svg class="r" style="left:1199.0px;top:259.0px;" width="13" height="13" viewBox="0 0 13 13"><circle cx="6.5" cy="6.5" r="6" fill="#fff" stroke="#333" stroke-width="1"/></svg>
<div class="t" style="left:1214.5px;top:261.11px;font-size:10.5px;color:#000;">Lire</div>
<div class="r" style="left:146px;top:282px;width:114px;height:1px;"></div>
<div class="r" style="left:146px;top:282px;width:1113px;height:420px;border-top:2px solid #a0a0a4;border-left:2px solid #a0a0a4;border-right:1px solid #a0a0a4;border-bottom:1px solid #a0a0a4;background:#fff;"></div>
<div class="r" style="left:149px;top:286px;width:1108px;height:397px;overflow:hidden;background:#8aac46;">
<div class="r" style="left:0px;top:0px;width:1108px;height:23px;background:#fff;"></div>
<div class="r" style="left:1px;top:0px;width:63px;height:22px;background:#000;border-right:1px solid #808080;border-bottom:1px solid #808080;"></div>
<div class="t" style="left:1px;top:4.69px;font-size:11px;color:#ffff00;width:62px;text-align:center;">6</div>
<div class="r" style="left:66px;top:0px;width:75px;height:15px;background:#6a9000;border-right:1px solid #c8c8c8;"></div>
<div class="r" style="left:66px;top:17px;width:74px;height:5px;background:#ececec;"></div>
<div class="r" style="left:76px;top:19px;width:51px;height:1px;background:repeating-linear-gradient(90deg,#000 0 1px,transparent 1px 2px);"></div>
<svg class="r" style="left:70px;top:17px;" width="6" height="4" viewBox="0 0 6 4"><path d="M0 0H6L3 4Z" fill="#000"/></svg>
<svg class="r" style="left:130px;top:17px;" width="6" height="4" viewBox="0 0 6 4"><path d="M0 0H6L3 4Z" fill="#000"/></svg>
<div class="t" style="left:73px;top:1.44px;font-size:12px;color:#fff;">Anno</div>
<svg class="r" style="left:114px;top:0px;" width="25" height="14" viewBox="0 0 25 14"><circle cx="6.2" cy="5.6" r="3.5" fill="none" stroke="#000" stroke-width="1.1"/><path d="M8.7 3.2 A3.5 3.5 0 0 1 3.8 8.1" fill="none" stroke="#fff" stroke-width="1.1"/><path d="M3.6 8.4 L0.9 11.3" stroke="#000" stroke-width="1.2"/><path d="M4.6 9.2 L2 12" stroke="#fff" stroke-width="1"/><path d="M12.6 6.6 L17.2 2 M17.2 11.6 L21.8 6.6 M12.6 6.2 H21.8" fill="none" stroke="#000" stroke-width="1.1"/><path d="M17.2 2 L21.8 6.6 M12.6 6.6 L17.2 11.6 M13.1 7.3 H21.3" fill="none" stroke="#fff" stroke-width="1.1"/></svg>
<div class="r" style="left:143px;top:0px;width:66px;height:15px;background:#6a9000;border-right:1px solid #c8c8c8;"></div>
<div class="r" style="left:143px;top:17px;width:65px;height:5px;background:#ececec;"></div>
<div class="r" style="left:153px;top:19px;width:42px;height:1px;background:repeating-linear-gradient(90deg,#000 0 1px,transparent 1px 2px);"></div>
<svg class="r" style="left:147px;top:17px;" width="6" height="4" viewBox="0 0 6 4"><path d="M0 0H6L3 4Z" fill="#000"/></svg>
<svg class="r" style="left:198px;top:17px;" width="6" height="4" viewBox="0 0 6 4"><path d="M0 0H6L3 4Z" fill="#000"/></svg>
<div class="t" style="left:142.5px;top:1.44px;font-size:12px;color:#fff;">Num...</div>
<svg class="r" style="left:182px;top:0px;" width="25" height="14" viewBox="0 0 25 14"><circle cx="6.2" cy="5.6" r="3.5" fill="none" stroke="#000" stroke-width="1.1"/><path d="M8.7 3.2 A3.5 3.5 0 0 1 3.8 8.1" fill="none" stroke="#fff" stroke-width="1.1"/><path d="M3.6 8.4 L0.9 11.3" stroke="#000" stroke-width="1.2"/><path d="M4.6 9.2 L2 12" stroke="#fff" stroke-width="1"/><path d="M12.6 6.6 L17.2 2 M17.2 11.6 L21.8 6.6 M12.6 6.2 H21.8" fill="none" stroke="#000" stroke-width="1.1"/><path d="M17.2 2 L21.8 6.6 M12.6 6.6 L17.2 11.6 M13.1 7.3 H21.3" fill="none" stroke="#fff" stroke-width="1.1"/></svg>
<div class="r" style="left:211px;top:0px;width:111px;height:15px;background:#6a9000;border-right:1px solid #c8c8c8;"></div>
<div class="r" style="left:211px;top:17px;width:110px;height:5px;background:#ececec;"></div>
<div class="r" style="left:221px;top:19px;width:87px;height:1px;background:repeating-linear-gradient(90deg,#000 0 1px,transparent 1px 2px);"></div>
<svg class="r" style="left:215px;top:17px;" width="6" height="4" viewBox="0 0 6 4"><path d="M0 0H6L3 4Z" fill="#000"/></svg>
<svg class="r" style="left:311px;top:17px;" width="6" height="4" viewBox="0 0 6 4"><path d="M0 0H6L3 4Z" fill="#000"/></svg>
<div class="t" style="left:238px;top:1.44px;font-size:12px;color:#fff;">Data</div>
<svg class="r" style="left:295px;top:0px;" width="25" height="14" viewBox="0 0 25 14"><circle cx="6.2" cy="5.6" r="3.5" fill="none" stroke="#000" stroke-width="1.1"/><path d="M8.7 3.2 A3.5 3.5 0 0 1 3.8 8.1" fill="none" stroke="#fff" stroke-width="1.1"/><path d="M3.6 8.4 L0.9 11.3" stroke="#000" stroke-width="1.2"/><path d="M4.6 9.2 L2 12" stroke="#fff" stroke-width="1"/><path d="M13.3 2.3 H22.6 M13.6 2.3 L18 11.4" fill="none" stroke="#000" stroke-width="1.3"/><path d="M22.3 2.6 L18.3 11.4" fill="none" stroke="#fff" stroke-width="1.3"/></svg>
<div class="r" style="left:324px;top:0px;width:256px;height:15px;background:#6a9000;border-right:1px solid #c8c8c8;"></div>
<div class="r" style="left:324px;top:17px;width:255px;height:5px;background:#ececec;"></div>
<div class="r" style="left:334px;top:19px;width:232px;height:1px;background:repeating-linear-gradient(90deg,#000 0 1px,transparent 1px 2px);"></div>
<svg class="r" style="left:328px;top:17px;" width="6" height="4" viewBox="0 0 6 4"><path d="M0 0H6L3 4Z" fill="#000"/></svg>
<svg class="r" style="left:569px;top:17px;" width="6" height="4" viewBox="0 0 6 4"><path d="M0 0H6L3 4Z" fill="#000"/></svg>
<div class="t" style="left:397.6px;top:1.44px;font-size:12px;color:#fff;">XML Generato</div>
<svg class="r" style="left:553px;top:0px;" width="25" height="14" viewBox="0 0 25 14"><circle cx="6.2" cy="5.6" r="3.5" fill="none" stroke="#000" stroke-width="1.1"/><path d="M8.7 3.2 A3.5 3.5 0 0 1 3.8 8.1" fill="none" stroke="#fff" stroke-width="1.1"/><path d="M3.6 8.4 L0.9 11.3" stroke="#000" stroke-width="1.2"/><path d="M4.6 9.2 L2 12" stroke="#fff" stroke-width="1"/><path d="M12.6 6.6 L17.2 2 M17.2 11.6 L21.8 6.6 M12.6 6.2 H21.8" fill="none" stroke="#000" stroke-width="1.1"/><path d="M17.2 2 L21.8 6.6 M12.6 6.6 L17.2 11.6 M13.1 7.3 H21.3" fill="none" stroke="#fff" stroke-width="1.1"/></svg>
<div class="r" style="left:582px;top:0px;width:221px;height:15px;background:#6a9000;border-right:1px solid #c8c8c8;"></div>
<div class="r" style="left:582px;top:17px;width:220px;height:5px;background:#ececec;"></div>
<div class="r" style="left:592px;top:19px;width:197px;height:1px;background:repeating-linear-gradient(90deg,#000 0 1px,transparent 1px 2px);"></div>
<svg class="r" style="left:586px;top:17px;" width="6" height="4" viewBox="0 0 6 4"><path d="M0 0H6L3 4Z" fill="#000"/></svg>
<svg class="r" style="left:792px;top:17px;" width="6" height="4" viewBox="0 0 6 4"><path d="M0 0H6L3 4Z" fill="#000"/></svg>
<div class="t" style="left:607.2px;top:1.44px;font-size:12px;color:#fff;">Denominazione/Cognome</div>
<svg class="r" style="left:776px;top:0px;" width="25" height="14" viewBox="0 0 25 14"><circle cx="6.2" cy="5.6" r="3.5" fill="none" stroke="#000" stroke-width="1.1"/><path d="M8.7 3.2 A3.5 3.5 0 0 1 3.8 8.1" fill="none" stroke="#fff" stroke-width="1.1"/><path d="M3.6 8.4 L0.9 11.3" stroke="#000" stroke-width="1.2"/><path d="M4.6 9.2 L2 12" stroke="#fff" stroke-width="1"/><path d="M12.6 6.6 L17.2 2 M17.2 11.6 L21.8 6.6 M12.6 6.2 H21.8" fill="none" stroke="#000" stroke-width="1.1"/><path d="M17.2 2 L21.8 6.6 M12.6 6.6 L17.2 11.6 M13.1 7.3 H21.3" fill="none" stroke="#fff" stroke-width="1.1"/></svg>
<div class="r" style="left:805px;top:0px;width:104px;height:15px;background:#6a9000;border-right:1px solid #c8c8c8;"></div>
<div class="r" style="left:805px;top:17px;width:103px;height:5px;background:#ececec;"></div>
<div class="r" style="left:815px;top:19px;width:80px;height:1px;background:repeating-linear-gradient(90deg,#000 0 1px,transparent 1px 2px);"></div>
<svg class="r" style="left:809px;top:17px;" width="6" height="4" viewBox="0 0 6 4"><path d="M0 0H6L3 4Z" fill="#000"/></svg>
<svg class="r" style="left:898px;top:17px;" width="6" height="4" viewBox="0 0 6 4"><path d="M0 0H6L3 4Z" fill="#000"/></svg>
<div class="t" style="left:825px;top:1.44px;font-size:12px;color:#fff;">Nome</div>
<svg class="r" style="left:882px;top:0px;" width="25" height="14" viewBox="0 0 25 14"><circle cx="6.2" cy="5.6" r="3.5" fill="none" stroke="#000" stroke-width="1.1"/><path d="M8.7 3.2 A3.5 3.5 0 0 1 3.8 8.1" fill="none" stroke="#fff" stroke-width="1.1"/><path d="M3.6 8.4 L0.9 11.3" stroke="#000" stroke-width="1.2"/><path d="M4.6 9.2 L2 12" stroke="#fff" stroke-width="1"/><path d="M12.6 6.6 L17.2 2 M17.2 11.6 L21.8 6.6 M12.6 6.2 H21.8" fill="none" stroke="#000" stroke-width="1.1"/><path d="M17.2 2 L21.8 6.6 M12.6 6.6 L17.2 11.6 M13.1 7.3 H21.3" fill="none" stroke="#fff" stroke-width="1.1"/></svg>
<div class="r" style="left:911px;top:0px;width:144px;height:15px;background:#6a9000;border-right:1px solid #c8c8c8;"></div>
<div class="r" style="left:911px;top:17px;width:143px;height:5px;background:#ececec;"></div>
<div class="r" style="left:921px;top:19px;width:120px;height:1px;background:repeating-linear-gradient(90deg,#000 0 1px,transparent 1px 2px);"></div>
<svg class="r" style="left:915px;top:17px;" width="6" height="4" viewBox="0 0 6 4"><path d="M0 0H6L3 4Z" fill="#000"/></svg>
<svg class="r" style="left:1044px;top:17px;" width="6" height="4" viewBox="0 0 6 4"><path d="M0 0H6L3 4Z" fill="#000"/></svg>
<div class="t" style="left:928px;top:1.44px;font-size:12px;color:#fff;">Data di nascita</div>
<svg class="r" style="left:1028px;top:0px;" width="25" height="14" viewBox="0 0 25 14"><circle cx="6.2" cy="5.6" r="3.5" fill="none" stroke="#000" stroke-width="1.1"/><path d="M8.7 3.2 A3.5 3.5 0 0 1 3.8 8.1" fill="none" stroke="#fff" stroke-width="1.1"/><path d="M3.6 8.4 L0.9 11.3" stroke="#000" stroke-width="1.2"/><path d="M4.6 9.2 L2 12" stroke="#fff" stroke-width="1"/><path d="M12.6 6.6 L17.2 2 M17.2 11.6 L21.8 6.6 M12.6 6.2 H21.8" fill="none" stroke="#000" stroke-width="1.1"/><path d="M17.2 2 L21.8 6.6 M12.6 6.6 L17.2 11.6 M13.1 7.3 H21.3" fill="none" stroke="#fff" stroke-width="1.1"/></svg>
<div class="r" style="left:1057px;top:0px;width:351px;height:15px;background:#6a9000;border-right:1px solid #c8c8c8;"></div>
<div class="r" style="left:1057px;top:17px;width:350px;height:5px;background:#ececec;"></div>
<div class="r" style="left:1067px;top:19px;width:327px;height:1px;background:repeating-linear-gradient(90deg,#000 0 1px,transparent 1px 2px);"></div>
<svg class="r" style="left:1061px;top:17px;" width="6" height="4" viewBox="0 0 6 4"><path d="M0 0H6L3 4Z" fill="#000"/></svg>
<svg class="r" style="left:1397px;top:17px;" width="6" height="4" viewBox="0 0 6 4"><path d="M0 0H6L3 4Z" fill="#000"/></svg>
<div class="t" style="left:1080px;top:1.44px;font-size:12px;color:#fff;">Importo</div>
<div class="r" style="left:0px;top:22px;width:1408px;height:1px;background:#000;"></div>
<div class="r" style="left:65px;top:23px;width:1344px;height:17px;background:#fdfdfb;"></div>
<div class="r" style="left:0px;top:23px;width:64px;height:16px;background:#fff;"></div>
<div class="r" style="left:1px;top:24px;width:63px;height:15px;background:#80bc00;border-right:1px solid #808080;"></div>
<div class="r" style="left:1px;top:39px;width:64px;height:1px;background:#000;"></div>
<div class="t" style="left:1px;top:26.24px;font-size:10.7px;color:#fff;width:62px;text-align:center;">215</div>
<div class="t" style="left:64px;top:26.24px;font-size:10.7px;color:#000;width:75px;text-align:right;">2018</div>
<div class="t" style="left:141px;top:26.24px;font-size:10.7px;color:#000;width:66px;text-align:right;">11</div>
<div class="t" style="left:211px;top:26.24px;font-size:10.7px;color:#000;">20/12/2018</div>
<div class="t" style="left:324px;top:26.24px;font-size:10.7px;color:#000;">XML generato (da spedire)</div>
<div class="t" style="left:582px;top:26.24px;font-size:10.7px;color:#000;letter-spacing:-0.5px;">PROVA A1</div>
<div class="t" style="left:805px;top:26.24px;font-size:10.7px;color:#000;letter-spacing:-0.5px;">PROVA</div>
<div class="t" style="left:911px;top:26.24px;font-size:10.7px;color:#000;">12/02/1970</div>
<div class="r" style="left:65px;top:40px;width:1344px;height:17px;background:#f2fae6;"></div>
<div class="r" style="left:0px;top:40px;width:64px;height:16px;background:#fff;"></div>
<div class="r" style="left:1px;top:41px;width:63px;height:15px;background:#80bc00;border-right:1px solid #808080;"></div>
<div class="r" style="left:1px;top:56px;width:64px;height:1px;background:#000;"></div>
<div class="t" style="left:1px;top:43.24px;font-size:10.7px;color:#fff;width:62px;text-align:center;">216</div>
<div class="t" style="left:64px;top:43.24px;font-size:10.7px;color:#000;width:75px;text-align:right;">2018</div>
<div class="t" style="left:141px;top:43.24px;font-size:10.7px;color:#000;width:66px;text-align:right;">12</div>
<div class="t" style="left:211px;top:43.24px;font-size:10.7px;color:#000;">20/12/2018</div>
<div class="t" style="left:324px;top:43.24px;font-size:10.7px;color:#000;">XML generato (da spedire)</div>
<div class="t" style="left:582px;top:43.24px;font-size:10.7px;color:#000;letter-spacing:-0.5px;">BORGHI</div>
<div class="t" style="left:805px;top:43.24px;font-size:10.7px;color:#000;letter-spacing:-0.5px;">PAOLA</div>
<div class="t" style="left:911px;top:43.24px;font-size:10.7px;color:#000;">31/07/1999</div>
<div class="r" style="left:65px;top:57px;width:1344px;height:17px;background:#fdfdfb;"></div>
<div class="r" style="left:0px;top:57px;width:64px;height:16px;background:#fff;"></div>
<div class="r" style="left:1px;top:58px;width:63px;height:15px;background:#80bc00;border-right:1px solid #808080;"></div>
<div class="r" style="left:1px;top:73px;width:64px;height:1px;background:#000;"></div>
<div class="t" style="left:1px;top:60.24px;font-size:10.7px;color:#fff;width:62px;text-align:center;">217</div>
<div class="t" style="left:64px;top:60.24px;font-size:10.7px;color:#000;width:75px;text-align:right;">2018</div>
<div class="t" style="left:141px;top:60.24px;font-size:10.7px;color:#000;width:66px;text-align:right;">13</div>
<div class="t" style="left:211px;top:60.24px;font-size:10.7px;color:#000;">20/12/2018</div>
<div class="t" style="left:324px;top:60.24px;font-size:10.7px;color:#000;">XML generato (da spedire)</div>
<div class="t" style="left:582px;top:60.24px;font-size:10.7px;color:#000;letter-spacing:-0.5px;">RIMONDI</div>
<div class="t" style="left:805px;top:60.24px;font-size:10.7px;color:#000;letter-spacing:-0.5px;">SARA</div>
<div class="t" style="left:911px;top:60.24px;font-size:10.7px;color:#000;">30/01/1996</div>
<div class="r" style="left:65px;top:74px;width:1344px;height:17px;background:#f2fae6;"></div>
<div class="r" style="left:0px;top:74px;width:64px;height:16px;background:#fff;"></div>
<div class="r" style="left:1px;top:75px;width:63px;height:15px;background:#80bc00;border-right:1px solid #808080;"></div>
<div class="r" style="left:1px;top:90px;width:64px;height:1px;background:#000;"></div>
<div class="t" style="left:1px;top:77.24px;font-size:10.7px;color:#fff;width:62px;text-align:center;">218</div>
<div class="t" style="left:64px;top:77.24px;font-size:10.7px;color:#000;width:75px;text-align:right;">2018</div>
<div class="t" style="left:141px;top:77.24px;font-size:10.7px;color:#000;width:66px;text-align:right;">14</div>
<div class="t" style="left:211px;top:77.24px;font-size:10.7px;color:#000;">20/12/2018</div>
<div class="t" style="left:324px;top:77.24px;font-size:10.7px;color:#000;">XML generato (da spedire)</div>
<div class="t" style="left:582px;top:77.24px;font-size:10.7px;color:#000;letter-spacing:-0.5px;">ZUCCHINI</div>
<div class="t" style="left:805px;top:77.24px;font-size:10.7px;color:#000;letter-spacing:-0.5px;">ENRICO</div>
<div class="t" style="left:911px;top:77.24px;font-size:10.7px;color:#000;">21/05/1998</div>
<div class="r" style="left:65px;top:91px;width:1344px;height:17px;background:#fdfdfb;"></div>
<div class="r" style="left:0px;top:91px;width:64px;height:16px;background:#fff;"></div>
<div class="r" style="left:1px;top:92px;width:63px;height:15px;background:#80bc00;border-right:1px solid #808080;"></div>
<div class="r" style="left:1px;top:107px;width:64px;height:1px;background:#000;"></div>
<div class="t" style="left:1px;top:94.24px;font-size:10.7px;color:#fff;width:62px;text-align:center;">219</div>
<div class="t" style="left:64px;top:94.24px;font-size:10.7px;color:#000;width:75px;text-align:right;">2018</div>
<div class="t" style="left:141px;top:94.24px;font-size:10.7px;color:#000;width:66px;text-align:right;">15</div>
<div class="t" style="left:211px;top:94.24px;font-size:10.7px;color:#000;">20/12/2018</div>
<div class="t" style="left:324px;top:94.24px;font-size:10.7px;color:#000;">XML generato (da spedire)</div>
<div class="t" style="left:582px;top:94.24px;font-size:10.7px;color:#000;letter-spacing:-0.5px;">CASTELLI</div>
<div class="t" style="left:805px;top:94.24px;font-size:10.7px;color:#000;letter-spacing:-0.5px;">VALERIA</div>
<div class="t" style="left:911px;top:94.24px;font-size:10.7px;color:#000;">09/04/1999</div>
<div class="r" style="left:65px;top:108px;width:1344px;height:17px;background:#f2fae6;"></div>
<div class="r" style="left:0px;top:108px;width:64px;height:16px;background:#fff;"></div>
<div class="r" style="left:1px;top:109px;width:63px;height:15px;background:#80bc00;border-right:1px solid #808080;"></div>
<div class="r" style="left:1px;top:124px;width:64px;height:1px;background:#000;"></div>
<div class="t" style="left:1px;top:111.24px;font-size:10.7px;color:#fff;width:62px;text-align:center;">220</div>
<div class="t" style="left:64px;top:111.24px;font-size:10.7px;color:#000;width:75px;text-align:right;">2018</div>
<div class="t" style="left:141px;top:111.24px;font-size:10.7px;color:#000;width:66px;text-align:right;">16</div>
<div class="r" style="left:210px;top:108px;width:112px;height:17px;background:#000;"></div>
<div class="r" style="left:210px;top:108px;width:112px;height:17px;border:1px dotted #e6efc8;"></div>
<div class="t" style="left:211px;top:111.24px;font-size:10.7px;color:#fff;">20/12/2018</div>
<div class="r" style="left:323px;top:108px;width:257px;height:17px;background:#000;"></div>
<div class="t" style="left:324px;top:111.24px;font-size:10.7px;color:#fff;">XML da generare</div>
<div class="t" style="left:582px;top:111.24px;font-size:10.7px;color:#000;letter-spacing:-0.5px;">SDFASDFA</div>
<div class="t" style="left:805px;top:111.24px;font-size:10.7px;color:#000;letter-spacing:-0.5px;">ASDFA</div>
<div class="t" style="left:911px;top:111.24px;font-size:10.7px;color:#000;">12/02/2002</div>
<div class="r" style="left:64px;top:-1px;width:1px;height:126px;background:#000;"></div>
<div class="r" style="left:141px;top:-1px;width:1px;height:126px;background:#000;"></div>
<div class="r" style="left:209px;top:-1px;width:1px;height:126px;background:#000;"></div>
<div class="r" style="left:322px;top:-1px;width:1px;height:126px;background:#000;"></div>
<div class="r" style="left:580px;top:-1px;width:1px;height:126px;background:#000;"></div>
<div class="r" style="left:803px;top:-1px;width:1px;height:126px;background:#000;"></div>
<div class="r" style="left:909px;top:-1px;width:1px;height:126px;background:#000;"></div>
<div class="r" style="left:1055px;top:-1px;width:1px;height:126px;background:#000;"></div>
</div>
<div class="r" style="left:150px;top:683px;width:1107px;height:1px;background:#fff;"></div>
<div class="r" style="left:150px;top:684px;width:1107px;height:16px;background:#f0f0f0;"></div>
<div class="r" style="left:166px;top:684px;width:17px;height:15px;background:#cdcdcd;"></div>
<svg class="r" style="left:152px;top:687px;" width="10" height="10" viewBox="0 0 10 10"><path d="M6.8 1.2 L2.8 5 L6.8 8.8" fill="none" stroke="#505050" stroke-width="2.2" stroke-linejoin="miter"/></svg>
<svg class="r" style="left:1244px;top:687px;" width="10" height="10" viewBox="0 0 10 10"><path d="M3.2 1.2 L7.2 5 L3.2 8.8" fill="none" stroke="#505050" stroke-width="2.2" stroke-linejoin="miter"/></svg>
<div class="r" style="left:146px;top:706px;width:114px;height:1px;"></div>
<div class="r" style="left:146px;top:706px;width:1113px;height:270px;border-top:2px solid #a0a0a4;border-left:2px solid #a0a0a4;border-right:1px solid #a0a0a4;border-bottom:1px solid #a0a0a4;background:#fff;"></div>
<div class="r" style="left:149px;top:710px;width:1108px;height:247px;overflow:hidden;background:#4598ad;">
<div class="r" style="left:0px;top:0px;width:1108px;height:23px;background:#fff;"></div>
<div class="r" style="left:1px;top:0px;width:63px;height:22px;background:#000;border-right:1px solid #808080;border-bottom:1px solid #808080;"></div>
<div class="t" style="left:1px;top:4.69px;font-size:11px;color:#ffff00;width:62px;text-align:center;">2</div>
<div class="r" style="left:66px;top:0px;width:91px;height:15px;background:#00838f;border-right:1px solid #c8c8c8;"></div>
<div class="r" style="left:66px;top:17px;width:90px;height:5px;background:#ececec;"></div>
<div class="r" style="left:76px;top:19px;width:67px;height:1px;background:repeating-linear-gradient(90deg,#000 0 1px,transparent 1px 2px);"></div>
<svg class="r" style="left:70px;top:17px;" width="6" height="4" viewBox="0 0 6 4"><path d="M0 0H6L3 4Z" fill="#000"/></svg>
<svg class="r" style="left:146px;top:17px;" width="6" height="4" viewBox="0 0 6 4"><path d="M0 0H6L3 4Z" fill="#000"/></svg>
<div class="t" style="left:66.4px;top:1.44px;font-size:12px;color:#fff;">Fattura/RF</div>
<svg class="r" style="left:130px;top:0px;" width="25" height="14" viewBox="0 0 25 14"><circle cx="6.2" cy="5.6" r="3.5" fill="none" stroke="#000" stroke-width="1.1"/><path d="M8.7 3.2 A3.5 3.5 0 0 1 3.8 8.1" fill="none" stroke="#fff" stroke-width="1.1"/><path d="M3.6 8.4 L0.9 11.3" stroke="#000" stroke-width="1.2"/><path d="M4.6 9.2 L2 12" stroke="#fff" stroke-width="1"/><path d="M12.6 6.6 L17.2 2 M17.2 11.6 L21.8 6.6 M12.6 6.2 H21.8" fill="none" stroke="#000" stroke-width="1.1"/><path d="M17.2 2 L21.8 6.6 M12.6 6.6 L17.2 11.6 M13.1 7.3 H21.3" fill="none" stroke="#fff" stroke-width="1.1"/></svg>
<div class="r" style="left:159px;top:0px;width:62px;height:15px;background:#00838f;border-right:1px solid #c8c8c8;"></div>
<div class="r" style="left:159px;top:17px;width:61px;height:5px;background:#ececec;"></div>
<div class="r" style="left:169px;top:19px;width:38px;height:1px;background:repeating-linear-gradient(90deg,#000 0 1px,transparent 1px 2px);"></div>
<svg class="r" style="left:163px;top:17px;" width="6" height="4" viewBox="0 0 6 4"><path d="M0 0H6L3 4Z" fill="#000"/></svg>
<svg class="r" style="left:210px;top:17px;" width="6" height="4" viewBox="0 0 6 4"><path d="M0 0H6L3 4Z" fill="#000"/></svg>
<div class="t" style="left:162.3px;top:1.44px;font-size:12px;color:#fff;">Data</div>
<svg class="r" style="left:194px;top:0px;" width="25" height="14" viewBox="0 0 25 14"><circle cx="6.2" cy="5.6" r="3.5" fill="none" stroke="#000" stroke-width="1.1"/><path d="M8.7 3.2 A3.5 3.5 0 0 1 3.8 8.1" fill="none" stroke="#fff" stroke-width="1.1"/><path d="M3.6 8.4 L0.9 11.3" stroke="#000" stroke-width="1.2"/><path d="M4.6 9.2 L2 12" stroke="#fff" stroke-width="1"/><path d="M13.3 2.3 H22.6 M13.6 2.3 L18 11.4" fill="none" stroke="#000" stroke-width="1.3"/><path d="M22.3 2.6 L18.3 11.4" fill="none" stroke="#fff" stroke-width="1.3"/></svg>
<div class="r" style="left:223px;top:0px;width:84px;height:15px;background:#00838f;border-right:1px solid #c8c8c8;"></div>
<div class="r" style="left:223px;top:17px;width:83px;height:5px;background:#ececec;"></div>
<div class="r" style="left:233px;top:19px;width:60px;height:1px;background:repeating-linear-gradient(90deg,#000 0 1px,transparent 1px 2px);"></div>
<svg class="r" style="left:227px;top:17px;" width="6" height="4" viewBox="0 0 6 4"><path d="M0 0H6L3 4Z" fill="#000"/></svg>
<svg class="r" style="left:296px;top:17px;" width="6" height="4" viewBox="0 0 6 4"><path d="M0 0H6L3 4Z" fill="#000"/></svg>
<div class="t" style="left:223.39999999999998px;top:1.44px;font-size:12px;color:#fff;">Cognome</div>
<svg class="r" style="left:280px;top:0px;" width="25" height="14" viewBox="0 0 25 14"><circle cx="6.2" cy="5.6" r="3.5" fill="none" stroke="#000" stroke-width="1.1"/><path d="M8.7 3.2 A3.5 3.5 0 0 1 3.8 8.1" fill="none" stroke="#fff" stroke-width="1.1"/><path d="M3.6 8.4 L0.9 11.3" stroke="#000" stroke-width="1.2"/><path d="M4.6 9.2 L2 12" stroke="#fff" stroke-width="1"/><path d="M12.6 6.6 L17.2 2 M17.2 11.6 L21.8 6.6 M12.6 6.2 H21.8" fill="none" stroke="#000" stroke-width="1.1"/><path d="M17.2 2 L21.8 6.6 M12.6 6.6 L17.2 11.6 M13.1 7.3 H21.3" fill="none" stroke="#fff" stroke-width="1.1"/></svg>
<div class="r" style="left:309px;top:0px;width:67px;height:15px;background:#00838f;border-right:1px solid #c8c8c8;"></div>
<div class="r" style="left:309px;top:17px;width:66px;height:5px;background:#ececec;"></div>
<div class="r" style="left:319px;top:19px;width:43px;height:1px;background:repeating-linear-gradient(90deg,#000 0 1px,transparent 1px 2px);"></div>
<svg class="r" style="left:313px;top:17px;" width="6" height="4" viewBox="0 0 6 4"><path d="M0 0H6L3 4Z" fill="#000"/></svg>
<svg class="r" style="left:365px;top:17px;" width="6" height="4" viewBox="0 0 6 4"><path d="M0 0H6L3 4Z" fill="#000"/></svg>
<div class="t" style="left:311px;top:1.44px;font-size:12px;color:#fff;">Nome</div>
<svg class="r" style="left:349px;top:0px;" width="25" height="14" viewBox="0 0 25 14"><circle cx="6.2" cy="5.6" r="3.5" fill="none" stroke="#000" stroke-width="1.1"/><path d="M8.7 3.2 A3.5 3.5 0 0 1 3.8 8.1" fill="none" stroke="#fff" stroke-width="1.1"/><path d="M3.6 8.4 L0.9 11.3" stroke="#000" stroke-width="1.2"/><path d="M4.6 9.2 L2 12" stroke="#fff" stroke-width="1"/><path d="M12.6 6.6 L17.2 2 M17.2 11.6 L21.8 6.6 M12.6 6.2 H21.8" fill="none" stroke="#000" stroke-width="1.1"/><path d="M17.2 2 L21.8 6.6 M12.6 6.6 L17.2 11.6 M13.1 7.3 H21.3" fill="none" stroke="#fff" stroke-width="1.1"/></svg>
<div class="r" style="left:378px;top:0px;width:110px;height:15px;background:#00838f;border-right:1px solid #c8c8c8;"></div>
<div class="r" style="left:378px;top:17px;width:109px;height:5px;background:#ececec;"></div>
<div class="r" style="left:388px;top:19px;width:86px;height:1px;background:repeating-linear-gradient(90deg,#000 0 1px,transparent 1px 2px);"></div>
<svg class="r" style="left:382px;top:17px;" width="6" height="4" viewBox="0 0 6 4"><path d="M0 0H6L3 4Z" fill="#000"/></svg>
<svg class="r" style="left:477px;top:17px;" width="6" height="4" viewBox="0 0 6 4"><path d="M0 0H6L3 4Z" fill="#000"/></svg>
<div class="t" style="left:378.5px;top:1.44px;font-size:12px;color:#fff;">Data di nascita</div>
<svg class="r" style="left:461px;top:0px;" width="25" height="14" viewBox="0 0 25 14"><circle cx="6.2" cy="5.6" r="3.5" fill="none" stroke="#000" stroke-width="1.1"/><path d="M8.7 3.2 A3.5 3.5 0 0 1 3.8 8.1" fill="none" stroke="#fff" stroke-width="1.1"/><path d="M3.6 8.4 L0.9 11.3" stroke="#000" stroke-width="1.2"/><path d="M4.6 9.2 L2 12" stroke="#fff" stroke-width="1"/><path d="M12.6 6.6 L17.2 2 M17.2 11.6 L21.8 6.6 M12.6 6.2 H21.8" fill="none" stroke="#000" stroke-width="1.1"/><path d="M17.2 2 L21.8 6.6 M12.6 6.6 L17.2 11.6 M13.1 7.3 H21.3" fill="none" stroke="#fff" stroke-width="1.1"/></svg>
<div class="r" style="left:490px;top:0px;width:244px;height:15px;background:#00838f;border-right:1px solid #c8c8c8;"></div>
<div class="r" style="left:490px;top:17px;width:243px;height:5px;background:#ececec;"></div>
<div class="r" style="left:500px;top:19px;width:220px;height:1px;background:repeating-linear-gradient(90deg,#000 0 1px,transparent 1px 2px);"></div>
<svg class="r" style="left:494px;top:17px;" width="6" height="4" viewBox="0 0 6 4"><path d="M0 0H6L3 4Z" fill="#000"/></svg>
<svg class="r" style="left:723px;top:17px;" width="6" height="4" viewBox="0 0 6 4"><path d="M0 0H6L3 4Z" fill="#000"/></svg>
<div class="t" style="left:565px;top:1.44px;font-size:12px;color:#fff;">Descrizione</div>
<svg class="r" style="left:707px;top:0px;" width="25" height="14" viewBox="0 0 25 14"><circle cx="6.2" cy="5.6" r="3.5" fill="none" stroke="#000" stroke-width="1.1"/><path d="M8.7 3.2 A3.5 3.5 0 0 1 3.8 8.1" fill="none" stroke="#fff" stroke-width="1.1"/><path d="M3.6 8.4 L0.9 11.3" stroke="#000" stroke-width="1.2"/><path d="M4.6 9.2 L2 12" stroke="#fff" stroke-width="1"/><path d="M12.6 6.6 L17.2 2 M17.2 11.6 L21.8 6.6 M12.6 6.2 H21.8" fill="none" stroke="#000" stroke-width="1.1"/><path d="M17.2 2 L21.8 6.6 M12.6 6.6 L17.2 11.6 M13.1 7.3 H21.3" fill="none" stroke="#fff" stroke-width="1.1"/></svg>
<div class="r" style="left:736px;top:0px;width:94px;height:15px;background:#00838f;border-right:1px solid #c8c8c8;"></div>
<div class="r" style="left:736px;top:17px;width:93px;height:5px;background:#ececec;"></div>
<div class="r" style="left:746px;top:19px;width:70px;height:1px;background:repeating-linear-gradient(90deg,#000 0 1px,transparent 1px 2px);"></div>
<svg class="r" style="left:740px;top:17px;" width="6" height="4" viewBox="0 0 6 4"><path d="M0 0H6L3 4Z" fill="#000"/></svg>
<svg class="r" style="left:819px;top:17px;" width="6" height="4" viewBox="0 0 6 4"><path d="M0 0H6L3 4Z" fill="#000"/></svg>
<div class="t" style="left:736.5px;top:1.44px;font-size:12px;color:#fff;">Prestazione</div>
<svg class="r" style="left:803px;top:0px;" width="25" height="14" viewBox="0 0 25 14"><circle cx="6.2" cy="5.6" r="3.5" fill="none" stroke="#000" stroke-width="1.1"/><path d="M8.7 3.2 A3.5 3.5 0 0 1 3.8 8.1" fill="none" stroke="#fff" stroke-width="1.1"/><path d="M3.6 8.4 L0.9 11.3" stroke="#000" stroke-width="1.2"/><path d="M4.6 9.2 L2 12" stroke="#fff" stroke-width="1"/><path d="M12.6 6.6 L17.2 2 M17.2 11.6 L21.8 6.6 M12.6 6.2 H21.8" fill="none" stroke="#000" stroke-width="1.1"/><path d="M17.2 2 L21.8 6.6 M12.6 6.6 L17.2 11.6 M13.1 7.3 H21.3" fill="none" stroke="#fff" stroke-width="1.1"/></svg>
<div class="r" style="left:832px;top:0px;width:76px;height:15px;background:#00838f;border-right:1px solid #c8c8c8;"></div>
<div class="r" style="left:832px;top:17px;width:75px;height:5px;background:#ececec;"></div>
<div class="r" style="left:842px;top:19px;width:52px;height:1px;background:repeating-linear-gradient(90deg,#000 0 1px,transparent 1px 2px);"></div>
<svg class="r" style="left:836px;top:17px;" width="6" height="4" viewBox="0 0 6 4"><path d="M0 0H6L3 4Z" fill="#000"/></svg>
<svg class="r" style="left:897px;top:17px;" width="6" height="4" viewBox="0 0 6 4"><path d="M0 0H6L3 4Z" fill="#000"/></svg>
<div class="t" style="left:834px;top:1.44px;font-size:12px;color:#fff;">Incasso</div>
<svg class="r" style="left:881px;top:0px;" width="25" height="14" viewBox="0 0 25 14"><circle cx="6.2" cy="5.6" r="3.5" fill="none" stroke="#000" stroke-width="1.1"/><path d="M8.7 3.2 A3.5 3.5 0 0 1 3.8 8.1" fill="none" stroke="#fff" stroke-width="1.1"/><path d="M3.6 8.4 L0.9 11.3" stroke="#000" stroke-width="1.2"/><path d="M4.6 9.2 L2 12" stroke="#fff" stroke-width="1"/><path d="M12.6 6.6 L17.2 2 M17.2 11.6 L21.8 6.6 M12.6 6.2 H21.8" fill="none" stroke="#000" stroke-width="1.1"/><path d="M17.2 2 L21.8 6.6 M12.6 6.6 L17.2 11.6 M13.1 7.3 H21.3" fill="none" stroke="#fff" stroke-width="1.1"/></svg>
<div class="r" style="left:910px;top:0px;width:76px;height:15px;background:#00838f;border-right:1px solid #c8c8c8;"></div>
<div class="r" style="left:910px;top:17px;width:75px;height:5px;background:#ececec;"></div>
<div class="r" style="left:920px;top:19px;width:52px;height:1px;background:repeating-linear-gradient(90deg,#000 0 1px,transparent 1px 2px);"></div>
<svg class="r" style="left:914px;top:17px;" width="6" height="4" viewBox="0 0 6 4"><path d="M0 0H6L3 4Z" fill="#000"/></svg>
<svg class="r" style="left:975px;top:17px;" width="6" height="4" viewBox="0 0 6 4"><path d="M0 0H6L3 4Z" fill="#000"/></svg>
<div class="t" style="left:911px;top:1.44px;font-size:12px;color:#fff;">Aliq.IVA</div>
<svg class="r" style="left:959px;top:0px;" width="25" height="14" viewBox="0 0 25 14"><circle cx="6.2" cy="5.6" r="3.5" fill="none" stroke="#000" stroke-width="1.1"/><path d="M8.7 3.2 A3.5 3.5 0 0 1 3.8 8.1" fill="none" stroke="#fff" stroke-width="1.1"/><path d="M3.6 8.4 L0.9 11.3" stroke="#000" stroke-width="1.2"/><path d="M4.6 9.2 L2 12" stroke="#fff" stroke-width="1"/><path d="M12.6 6.6 L17.2 2 M17.2 11.6 L21.8 6.6 M12.6 6.2 H21.8" fill="none" stroke="#000" stroke-width="1.1"/><path d="M17.2 2 L21.8 6.6 M12.6 6.6 L17.2 11.6 M13.1 7.3 H21.3" fill="none" stroke="#fff" stroke-width="1.1"/></svg>
<div class="r" style="left:988px;top:0px;width:79px;height:15px;background:#00838f;border-right:1px solid #c8c8c8;"></div>
<div class="r" style="left:988px;top:17px;width:78px;height:5px;background:#ececec;"></div>
<div class="r" style="left:998px;top:19px;width:55px;height:1px;background:repeating-linear-gradient(90deg,#000 0 1px,transparent 1px 2px);"></div>
<svg class="r" style="left:992px;top:17px;" width="6" height="4" viewBox="0 0 6 4"><path d="M0 0H6L3 4Z" fill="#000"/></svg>
<svg class="r" style="left:1056px;top:17px;" width="6" height="4" viewBox="0 0 6 4"><path d="M0 0H6L3 4Z" fill="#000"/></svg>
<div class="t" style="left:989px;top:1.44px;font-size:12px;color:#fff;">Pagante</div>
<svg class="r" style="left:1040px;top:0px;" width="25" height="14" viewBox="0 0 25 14"><circle cx="6.2" cy="5.6" r="3.5" fill="none" stroke="#000" stroke-width="1.1"/><path d="M8.7 3.2 A3.5 3.5 0 0 1 3.8 8.1" fill="none" stroke="#fff" stroke-width="1.1"/><path d="M3.6 8.4 L0.9 11.3" stroke="#000" stroke-width="1.2"/><path d="M4.6 9.2 L2 12" stroke="#fff" stroke-width="1"/><path d="M12.6 6.6 L17.2 2 M17.2 11.6 L21.8 6.6 M12.6 6.2 H21.8" fill="none" stroke="#000" stroke-width="1.1"/><path d="M17.2 2 L21.8 6.6 M12.6 6.6 L17.2 11.6 M13.1 7.3 H21.3" fill="none" stroke="#fff" stroke-width="1.1"/></svg>
<div class="r" style="left:1069px;top:0px;width:339px;height:15px;background:#00838f;border-right:1px solid #c8c8c8;"></div>
<div class="r" style="left:1069px;top:17px;width:338px;height:5px;background:#ececec;"></div>
<div class="r" style="left:1079px;top:19px;width:315px;height:1px;background:repeating-linear-gradient(90deg,#000 0 1px,transparent 1px 2px);"></div>
<svg class="r" style="left:1073px;top:17px;" width="6" height="4" viewBox="0 0 6 4"><path d="M0 0H6L3 4Z" fill="#000"/></svg>
<svg class="r" style="left:1397px;top:17px;" width="6" height="4" viewBox="0 0 6 4"><path d="M0 0H6L3 4Z" fill="#000"/></svg>
<div class="r" style="left:0px;top:22px;width:1408px;height:1px;background:#000;"></div>
<div class="r" style="left:65px;top:23px;width:1344px;height:17px;background:#ffffff;"></div>
<div class="r" style="left:0px;top:23px;width:64px;height:16px;background:#fff;"></div>
<div class="r" style="left:1px;top:24px;width:63px;height:15px;background:#00aabf;border-right:1px solid #808080;"></div>
<div class="r" style="left:1px;top:39px;width:64px;height:1px;background:#000;"></div>
<div class="t" style="left:1px;top:26.24px;font-size:10.7px;color:#fff;width:62px;text-align:center;">1121</div>
<div class="r" style="left:65px;top:23px;width:92px;height:17px;background:#000;"></div>
<div class="t" style="left:66px;top:26.24px;font-size:10.7px;color:#fff;">16/2018</div>
<div class="t" style="left:159px;top:26.24px;font-size:10.7px;color:#000;">20/12/2018</div>
<div class="t" style="left:223px;top:26.24px;font-size:10.7px;color:#000;letter-spacing:-0.5px;">SDFASDFA</div>
<div class="t" style="left:309px;top:26.24px;font-size:10.7px;color:#000;letter-spacing:-0.5px;">ASDFA</div>
<div class="t" style="left:378px;top:26.24px;font-size:10.7px;color:#000;">12/02/2002</div>
<div class="t" style="left:490px;top:26.24px;font-size:10.7px;color:#000;letter-spacing:-0.5px;">CORRISPETTIVO PER REVISIONI</div>
<div class="t" style="left:734px;top:26.24px;font-size:10.7px;color:#000;width:94px;text-align:right;">100,00€</div>
<div class="t" style="left:910px;top:26.24px;font-size:10.7px;color:#000;letter-spacing:-0.5px;">IVA</div>
<div class="t" style="left:1069px;top:26.24px;font-size:10.7px;color:#000;">Competenze</div>
<div class="r" style="left:65px;top:40px;width:1344px;height:17px;background:#e3f4fb;"></div>
<div class="r" style="left:0px;top:40px;width:64px;height:16px;background:#fff;"></div>
<div class="r" style="left:1px;top:41px;width:63px;height:15px;background:#00aabf;border-right:1px solid #808080;"></div>
<div class="r" style="left:1px;top:56px;width:64px;height:1px;background:#000;"></div>
<div class="t" style="left:1px;top:43.24px;font-size:10.7px;color:#fff;width:62px;text-align:center;">1122</div>
<div class="t" style="left:66px;top:43.24px;font-size:10.7px;color:#000;">16/2018</div>
<div class="t" style="left:159px;top:43.24px;font-size:10.7px;color:#000;">20/12/2018</div>
<div class="t" style="left:223px;top:43.24px;font-size:10.7px;color:#000;letter-spacing:-0.5px;">SDFASDFA</div>
<div class="t" style="left:309px;top:43.24px;font-size:10.7px;color:#000;letter-spacing:-0.5px;">ASDFA</div>
<div class="t" style="left:378px;top:43.24px;font-size:10.7px;color:#000;">12/02/2002</div>
<div class="t" style="left:490px;top:43.24px;font-size:10.7px;color:#000;letter-spacing:-0.5px;">SPESE DI SPEDIZIONE</div>
<div class="t" style="left:734px;top:43.24px;font-size:10.7px;color:#000;width:94px;text-align:right;">6,86€</div>
<div class="t" style="left:910px;top:43.24px;font-size:10.7px;color:#000;letter-spacing:-0.5px;">ES15</div>
<div class="t" style="left:1069px;top:43.24px;font-size:10.7px;color:#000;">Rimborso</div>
<div class="r" style="left:64px;top:-1px;width:1px;height:58px;background:#000;"></div>
<div class="r" style="left:157px;top:-1px;width:1px;height:58px;background:#000;"></div>
<div class="r" style="left:221px;top:-1px;width:1px;height:58px;background:#000;"></div>
<div class="r" style="left:307px;top:-1px;width:1px;height:58px;background:#000;"></div>
<div class="r" style="left:376px;top:-1px;width:1px;height:58px;background:#000;"></div>
<div class="r" style="left:488px;top:-1px;width:1px;height:58px;background:#000;"></div>
<div class="r" style="left:734px;top:-1px;width:1px;height:58px;background:#000;"></div>
<div class="r" style="left:830px;top:-1px;width:1px;height:58px;background:#000;"></div>
<div class="r" style="left:908px;top:-1px;width:1px;height:58px;background:#000;"></div>
<div class="r" style="left:986px;top:-1px;width:1px;height:58px;background:#000;"></div>
<div class="r" style="left:1067px;top:-1px;width:1px;height:58px;background:#000;"></div>
</div>
<div class="r" style="left:150px;top:957px;width:1107px;height:1px;background:#fff;"></div>
<div class="r" style="left:150px;top:958px;width:1107px;height:16px;background:#f0f0f0;"></div>
<div class="r" style="left:166px;top:958px;width:17px;height:15px;background:#cdcdcd;"></div>
<svg class="r" style="left:152px;top:961px;" width="10" height="10" viewBox="0 0 10 10"><path d="M6.8 1.2 L2.8 5 L6.8 8.8" fill="none" stroke="#505050" stroke-width="2.2" stroke-linejoin="miter"/></svg>
<svg class="r" style="left:1244px;top:961px;" width="10" height="10" viewBox="0 0 10 10"><path d="M3.2 1.2 L7.2 5 L3.2 8.8" fill="none" stroke="#505050" stroke-width="2.2" stroke-linejoin="miter"/></svg>
<div class="r" style="left:558px;top:404px;width:141px;height:167px;background:#f2f2f2;border:1px solid #cccccc;box-shadow:3px 3px 3px rgba(0,0,0,0.45);"></div>
<div class="r" style="left:559px;top:405px;width:30px;height:165px;background:#f0f0f0;"></div>
<div class="t" style="left:593.5px;top:412.08px;font-size:11.6px;color:#000;">Modifica</div>
<div class="t" style="left:593.5px;top:434.08px;font-size:11.6px;color:#000;">Nuovo</div>
<div class="t" style="left:593.5px;top:456.08px;font-size:11.6px;color:#8d8d8d;">Registra</div>
<div class="t" style="left:593.5px;top:478.08px;font-size:11.6px;color:#000;">Rimuovi</div>
<div class="r" style="left:589px;top:498px;width:107px;height:1px;background:#d7d7d7;"></div>
<div class="r" style="left:561px;top:524px;width:133px;height:22px;background:#91c9f7;"></div>
<div class="t" style="left:593.5px;top:506.68px;font-size:11.6px;color:#000;">Tabellone</div>
<div class="t" style="left:593.5px;top:528.68px;font-size:11.6px;color:#000;">XML</div>
<div class="t" style="left:593.5px;top:550.68px;font-size:11.6px;color:#000;">Stampe</div>
<svg class="r" style="left:681px;top:507.4px;" width="7" height="10" viewBox="0 0 7 10"><path d="M1.5 1 L5.5 5 L1.5 9" fill="none" stroke="#333" stroke-width="1.1"/></svg>
<svg class="r" style="left:681px;top:529.5px;" width="7" height="10" viewBox="0 0 7 10"><path d="M1.5 1 L5.5 5 L1.5 9" fill="none" stroke="#333" stroke-width="1.1"/></svg>
<svg class="r" style="left:681px;top:551.5px;" width="7" height="10" viewBox="0 0 7 10"><path d="M1.5 1 L5.5 5 L1.5 9" fill="none" stroke="#333" stroke-width="1.1"/></svg>
<div class="r" style="left:694px;top:521px;width:153px;height:116px;background:#f2f2f2;border:1px solid #cccccc;box-shadow:3px 3px 3px rgba(0,0,0,0.45);"></div>
<div class="r" style="left:696px;top:524px;width:148px;height:22px;background:#91c9f7;"></div>
<div class="t" style="left:728px;top:528.68px;font-size:11.6px;color:#000;">Genera XML</div>
<div class="t" style="left:728px;top:550.68px;font-size:11.6px;color:#000;">Apri</div>
<div class="t" style="left:728px;top:572.68px;font-size:11.6px;color:#000;">Esporta...</div>
<div class="t" style="left:728px;top:594.68px;font-size:11.6px;color:#000;">Copia (i file)</div>
<div class="t" style="left:728px;top:616.68px;font-size:11.6px;color:#000;">Invia</div>
</body></html>
